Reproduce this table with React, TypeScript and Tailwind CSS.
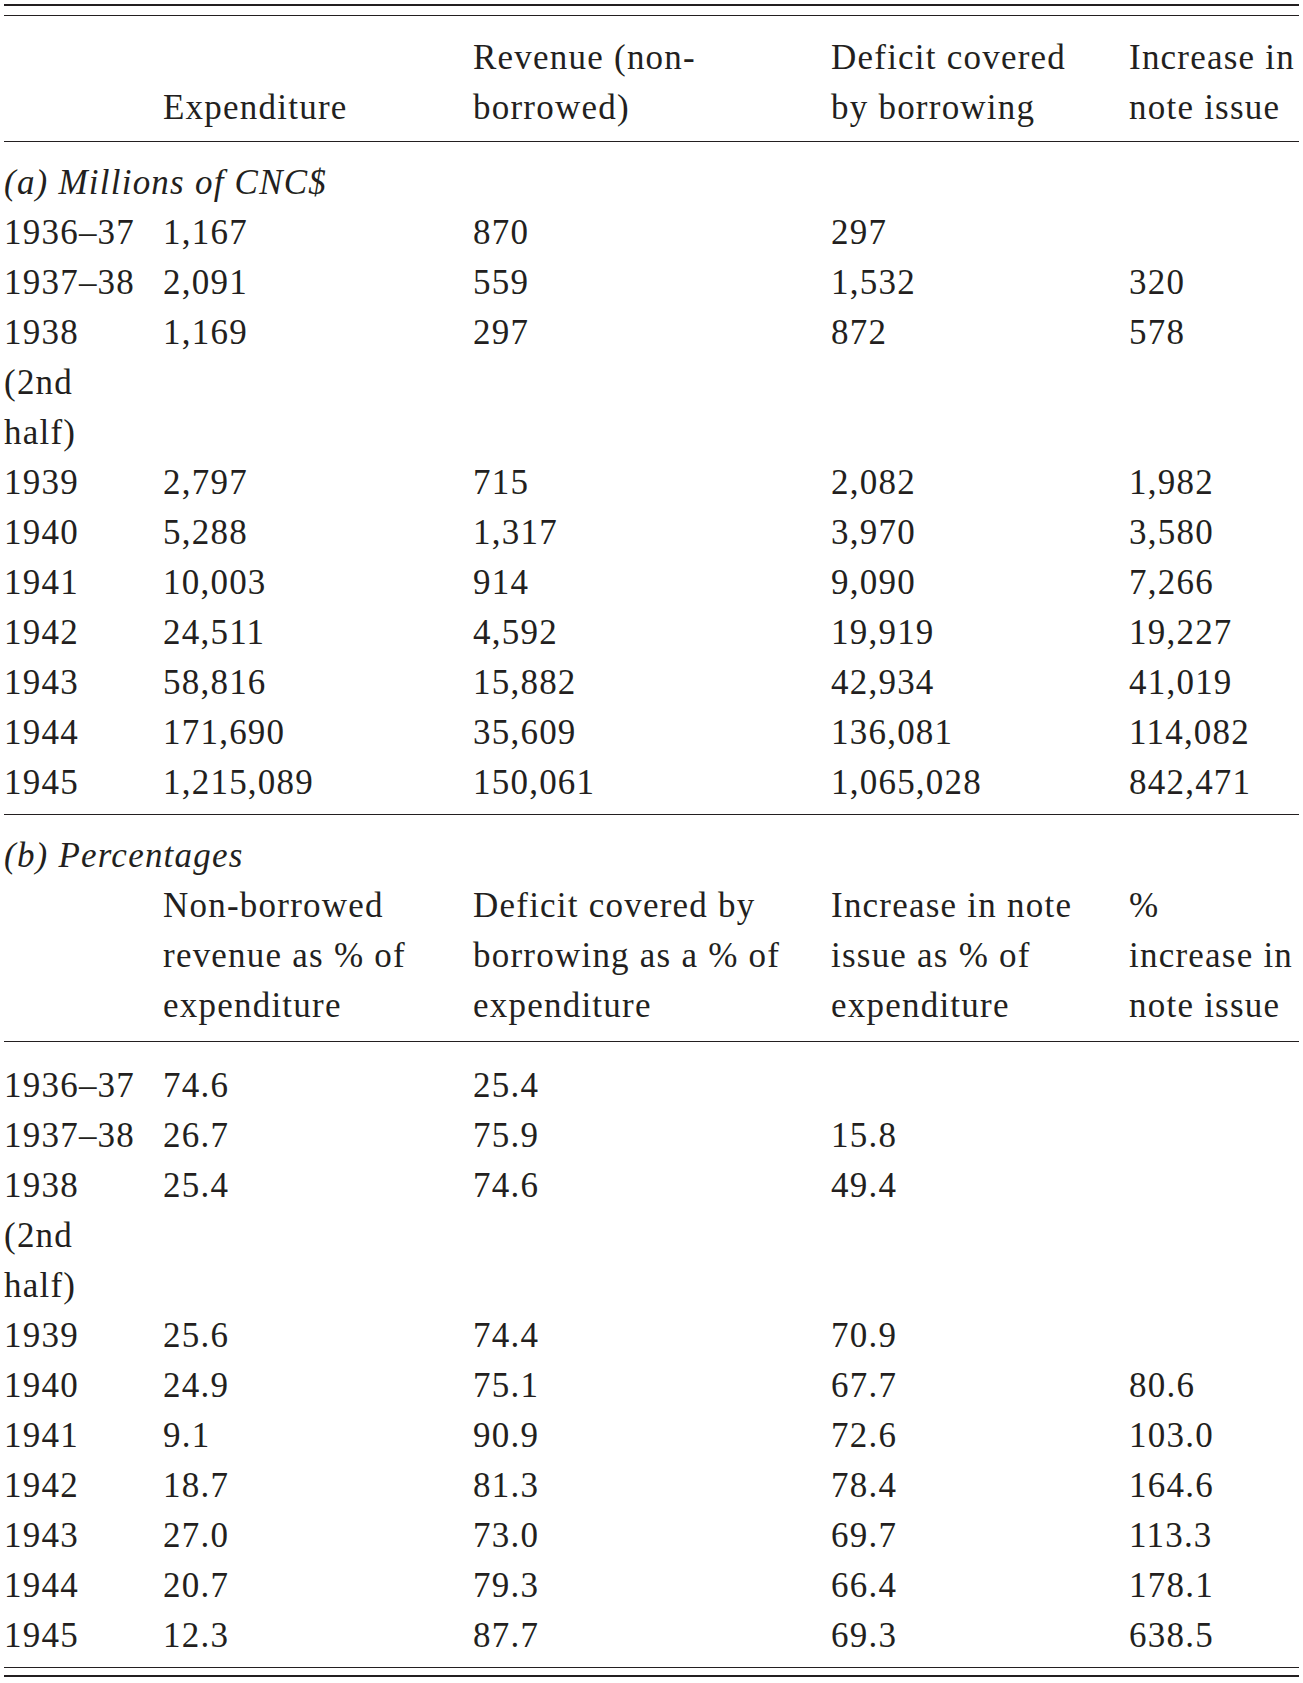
const cols = "grid grid-cols-[159px_310px_358px_298px_1fr]";

type Row = { year: string[]; values: string[] };

const millions: Row[] = [
  { year: ["1936–37"], values: ["1,167", "870", "297", ""] },
  { year: ["1937–38"], values: ["2,091", "559", "1,532", "320"] },
  { year: ["1938", "(2nd", "half)"], values: ["1,169", "297", "872", "578"] },
  { year: ["1939"], values: ["2,797", "715", "2,082", "1,982"] },
  { year: ["1940"], values: ["5,288", "1,317", "3,970", "3,580"] },
  { year: ["1941"], values: ["10,003", "914", "9,090", "7,266"] },
  { year: ["1942"], values: ["24,511", "4,592", "19,919", "19,227"] },
  { year: ["1943"], values: ["58,816", "15,882", "42,934", "41,019"] },
  { year: ["1944"], values: ["171,690", "35,609", "136,081", "114,082"] },
  { year: ["1945"], values: ["1,215,089", "150,061", "1,065,028", "842,471"] },
];

const percentages: Row[] = [
  { year: ["1936–37"], values: ["74.6", "25.4", "", ""] },
  { year: ["1937–38"], values: ["26.7", "75.9", "15.8", ""] },
  { year: ["1938", "(2nd", "half)"], values: ["25.4", "74.6", "49.4", ""] },
  { year: ["1939"], values: ["25.6", "74.4", "70.9", ""] },
  { year: ["1940"], values: ["24.9", "75.1", "67.7", "80.6"] },
  { year: ["1941"], values: ["9.1", "90.9", "72.6", "103.0"] },
  { year: ["1942"], values: ["18.7", "81.3", "78.4", "164.6"] },
  { year: ["1943"], values: ["27.0", "73.0", "69.7", "113.3"] },
  { year: ["1944"], values: ["20.7", "79.3", "66.4", "178.1"] },
  { year: ["1945"], values: ["12.3", "87.7", "69.3", "638.5"] },
];

function Lines({ lines }: { lines: string[] }) {
  return (
    <div>
      {lines.map((l, i) => (
        <div key={i} className="whitespace-nowrap">
          {l || "\u00a0"}
        </div>
      ))}
    </div>
  );
}

function DataRows({ rows }: { rows: Row[] }) {
  return (
    <div>
      {rows.map((r, i) => (
        <div key={i} className={cols}>
          <Lines lines={r.year} />
          {r.values.map((v, j) => (
            <div key={j} className="whitespace-nowrap">
              {v}
            </div>
          ))}
        </div>
      ))}
    </div>
  );
}

export default function App() {
  return (
    <div className="min-h-[1683px] bg-white">
      <div className="mx-[4px] pt-[4px] font-['Liberation_Serif',serif] text-[35px] leading-[50px] tracking-[0.035em] text-[#231f20]">
        <div className="border-t-2 border-[#231f20]" />
        <div className="mt-[9px] border-t border-[#231f20]" />

        <div className={`${cols} items-end pt-[17px] pb-[8px]`}>
          <div />
          <Lines lines={["Expenditure"]} />
          <Lines lines={["Revenue (non-", "borrowed)"]} />
          <Lines lines={["Deficit covered", "by borrowing"]} />
          <Lines lines={["Increase in", "note issue"]} />
        </div>
        <div className="border-t-[1.5px] border-[#231f20]" />

        <div className="mt-[16px] italic">(a) Millions of CNC$</div>
        <DataRows rows={millions} />

        <div className="mt-[6px] border-t-[1.5px] border-[#231f20]" />

        <div className="mt-[16px] italic">(b) Percentages</div>
        <div className={cols}>
          <div />
          <Lines lines={["Non-borrowed", "revenue as % of", "expenditure"]} />
          <Lines lines={["Deficit covered by", "borrowing as a % of", "expenditure"]} />
          <Lines lines={["Increase in note", "issue as % of", "expenditure"]} />
          <Lines lines={["%", "increase in", "note issue"]} />
        </div>
        <div className="mt-[10px] border-t-[1.5px] border-[#231f20]" />

        <div className="mt-[19px]">
          <DataRows rows={percentages} />
        </div>

        <div className="mt-[6px] border-t border-[#231f20]" />
        <div className="mt-[7px] border-t-2 border-[#231f20]" />
      </div>
    </div>
  );
}
